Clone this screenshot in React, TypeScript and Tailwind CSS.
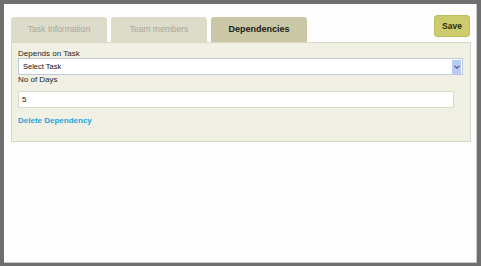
import React from "react";

export default function App() {
  const font = { fontFamily: '"Liberation Sans", Arial, sans-serif' };
  return (
    <div
      className="w-[481px] h-[266px] bg-[#6f6f6f] pt-[4px] pl-[4px] pr-[4px] pb-[3px]"
      style={font}
    >
      <div className="h-full bg-[#fdfdfd] border-r border-b border-[#c8c8c8] pl-[7px] pr-[5px] pt-[11px]">
        <div className="flex items-start">
          <div className="flex gap-[4px] mt-[2px]">
            <div className="w-[96px] h-[25px] rounded-t-[3px] bg-[#dddccb] flex items-center justify-center text-[8.5px] text-[#a9a898]">
              Task Information
            </div>
            <div className="w-[96px] h-[25px] rounded-t-[3px] bg-[#dddccb] flex items-center justify-center text-[8.5px] text-[#a9a898]">
              Team members
            </div>
            <div className="w-[96px] h-[25px] rounded-t-[3px] bg-[#c9c7a5] flex items-center justify-center text-[9px] font-bold text-[#1a1a1a]">
              Dependencies
            </div>
          </div>
          <button className="ml-auto mr-[1px] w-[36px] h-[22px] rounded-[3px] bg-[#cccb6d] border border-[#bdbc5f] text-[8.5px] font-bold text-[#2a2a10] flex items-center justify-center">
            Save
          </button>
        </div>
        <div className="h-[100px] bg-[#f1f0e4] border border-[#dad9c5] pt-[7px] pl-[6px]">
          <div className="h-[8px] leading-[8px] text-[8px] text-[#1e1e1e]">
            Depends on Task
          </div>
          <div className="w-[445px] h-[17px] bg-white border border-[#bccbd6] flex items-center pl-[4px] pr-[1px]">
            <span className="text-[7.5px] text-[#111]">Select Task</span>
            <div className="ml-auto w-[9px] h-[14px] bg-[#b9cbf3] flex items-center justify-center">
              <svg width="6" height="4" viewBox="0 0 6 4">
                <path d="M0.5 0.8 L3 3.2 L5.5 0.8" stroke="#4a5a7a" strokeWidth="1.1" fill="none" />
              </svg>
            </div>
          </div>
          <div className="mt-[1px] h-[8px] leading-[8px] text-[8px] text-[#1e1e1e]">
            No of Days
          </div>
          <div className="mt-[7px] w-[436px] h-[17px] bg-white border border-[#d9d9c6] rounded-[1px] flex items-center pl-[3px]">
            <span className="text-[8px] text-[#111]">5</span>
          </div>
          <div className="mt-[9px] h-[8px] leading-[8px] text-[8px] font-bold text-[#25a3da]">
            Delete Dependency
          </div>
        </div>
      </div>
    </div>
  );
}
